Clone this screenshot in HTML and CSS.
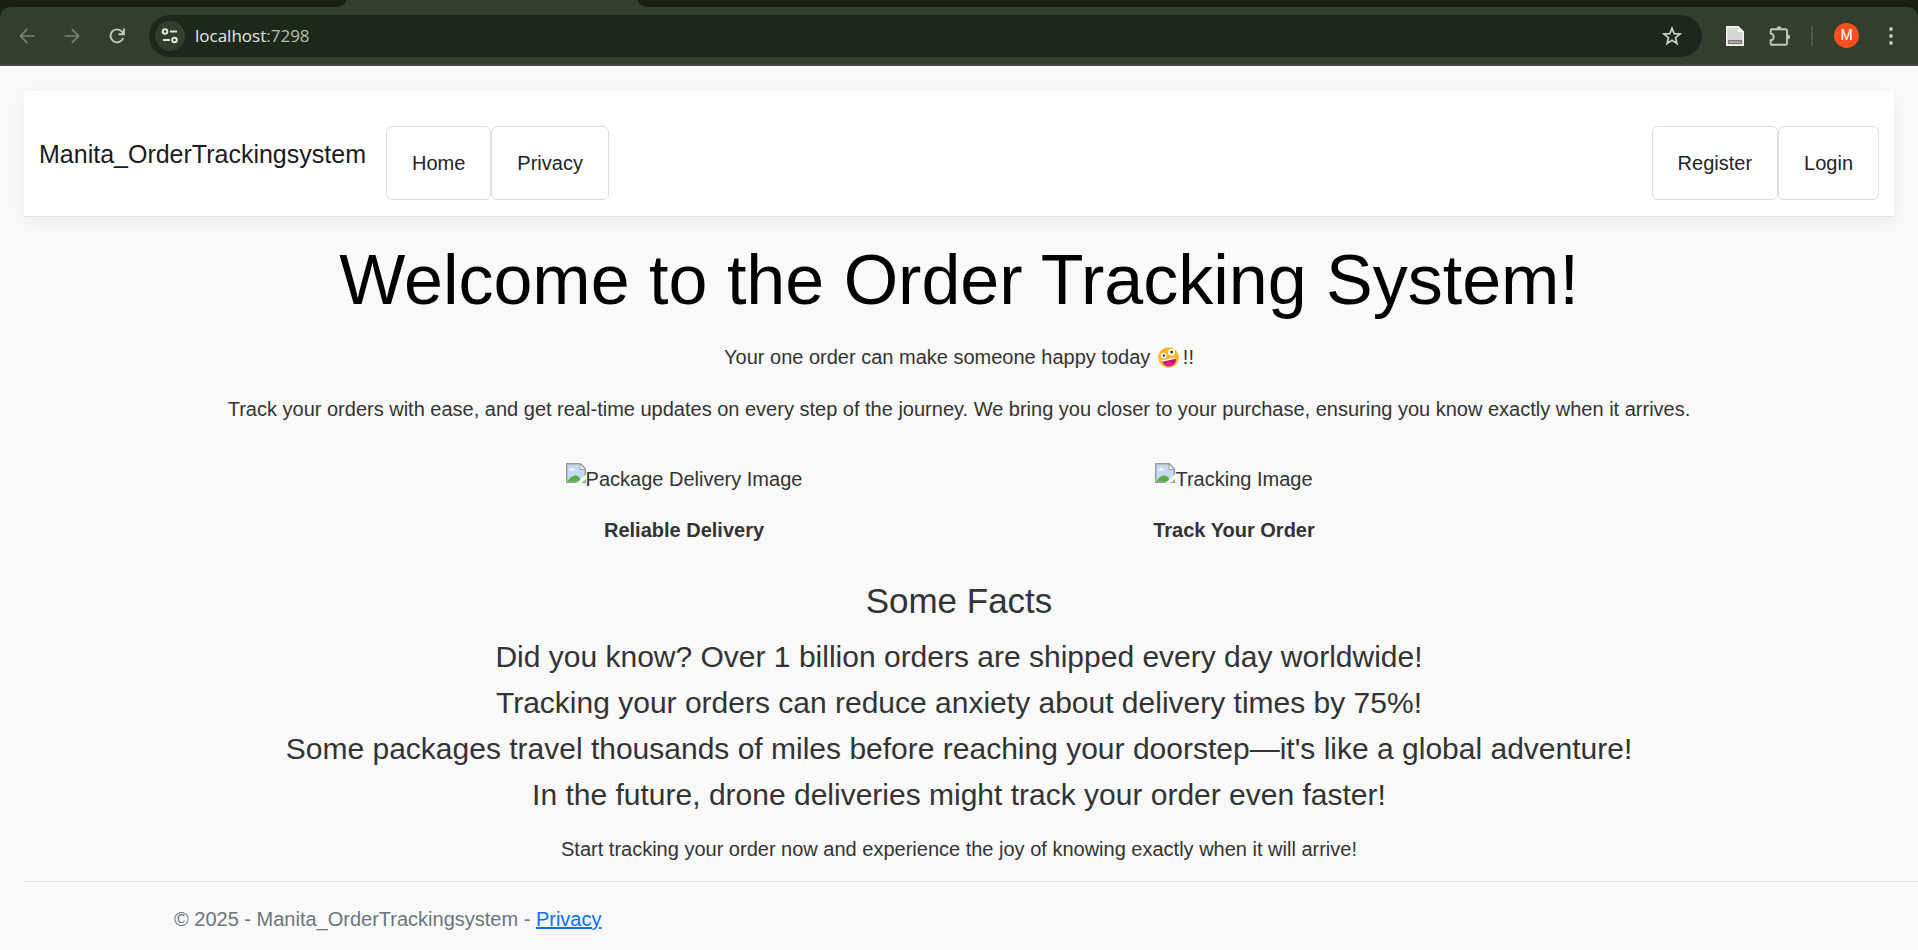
FILE: index.html
```html
<!DOCTYPE html>
<html lang="en">
<head>
<meta charset="utf-8">
<title>Home Page - Manita_OrderTrackingsystem</title>
<link rel="stylesheet" href="styles.css">
</head>
<body>
<div class="browser">
  <div class="tabs"><div class="tabs-left"></div><div class="tabs-right"></div></div>
  <div class="toolbar">
    <button class="tool dim" aria-label="Back"><svg width="16" height="16" viewBox="0 0 16 16" fill="none" stroke="currentColor" stroke-width="1.7"><path d="M15.500 8H1.500M8.200 1.200L1.400 8l6.800 6.800"/></svg></button>
    <button class="tool dim" aria-label="Forward"><svg width="16" height="16" viewBox="0 0 16 16" fill="none" stroke="currentColor" stroke-width="1.700"><path d="M.5 8h14M7.800 1.200L14.600 8l-6.800 6.800"/></svg></button>
    <button class="tool" aria-label="Reload"><svg width="16" height="16" viewBox="0 0 16 16" fill="none" stroke="currentColor" stroke-width="1.900"><path d="M14.200 10A6.500 6.500 0 1 1 13 3.600L14.600 5.500M15 .5v5.700H9.500"/></svg></button>
    <div class="address">
      <button class="site" aria-label="View site information"><svg width="18" height="16" viewBox="0 0 18 16" fill="none" stroke="currentColor" stroke-width="1.900"><circle cx="4" cy="3.500" r="2.300"/><path d="M9 3.500h7M2 12h7"/><circle cx="13.500" cy="12" r="2.300"/></svg></button>
      <div class="url" aria-label="Address">localhost<span class="port">:7298</span></div>
      <button class="star" aria-label="Bookmark this tab"><svg width="20" height="20" viewBox="0 0 20 20" fill="none" stroke="currentColor" stroke-width="1.700"><path d="M10 2.200l2.100 5.400 6 .4-4.600 3.700 1.500 5.800L10 14.300l-5 3.200 1.500-5.800L1.900 8l6-.4z"/></svg></button>
    </div>
    <button class="tool ext" aria-label="Extension"><svg width="18" height="20" viewBox="0 0 18 20"><path d="M.7.7h11.600l5 5v13.600H.7z" fill="#d6d6d6" stroke="#f4f4f4" stroke-width="1.400"/><path d="M12 .7v5.300h5.300z" fill="#fff"/><path d="M2.500 14.500h13v3h-13z" fill="#a9a9a9" stroke="#777"/></svg></button>
    <button class="tool" aria-label="Extensions"><svg width="22" height="22" viewBox="0 0 22 22"><path d="M2.800 4.300h13.900q1.300 0 1.300 1.300v12.900q0 1.300-1.300 1.300H2.800q-1.100 0-1.100-1.300v-3.200c4-.8 4-6 0-6.800V5.600q0-1.300 1.100-1.300z" fill="none" stroke="currentColor" stroke-width="1.900"/><path d="M7.500 3.800a2.500 2.500 0 0 1 5 0zM18.500 9.300a2.500 2.500 0 0 1 0 5z" fill="currentColor"/></svg></button>
    <span class="divider"></span>
    <button class="avatar" aria-label="Profile">M</button>
    <button class="tool menu" aria-label="Menu"><svg width="4" height="18" viewBox="0 0 4 18" fill="currentColor"><circle cx="2" cy="2" r="1.900"/><circle cx="2" cy="9" r="1.900"/><circle cx="2" cy="16" r="1.900"/></svg></button>
  </div>
</div>

<div class="page">
  <header class="header">
    <a class="brand" href="#">Manita_OrderTrackingsystem</a>
    <nav class="nav">
      <a class="nav-link" href="#">Home</a>
      <a class="nav-link" href="#privacy">Privacy</a>
    </nav>
    <nav class="nav account" aria-label="Account">
      <a class="nav-link" href="#register">Register</a>
      <a class="nav-link" href="#login">Login</a>
    </nav>
  </header>

  <main class="main">
    <h1>Welcome to the Order Tracking System!</h1>
    <p class="text">Your one order can make someone happy today <svg class="emoji" role="img" aria-label="Zany face" viewBox="0 0 20 20"><circle cx="10" cy="10" r="9.800" fill="#fdb52f"/><circle cx="5.400" cy="8.300" r="2.600" fill="#fff"/><circle cx="5.600" cy="8.300" r="1.100" fill="#222"/><circle cx="13" cy="5" r="3.200" fill="#fff"/><circle cx="13" cy="4.800" r="1.300" fill="#222"/><path d="M3.600 12.800L17 10.200c.6 4.300-1.600 7.200-4.900 8-3.500 1-7-.8-8.500-5.400z" fill="#b4126a"/><path d="M3.600 12.600L17 10l-.1 1.300L4.200 14z" fill="#fff"/><path d="M6.500 16c3-3 7-3 8.500 0-2 2.500-6 3-8.500 0z" fill="#e81c96"/></svg>!!</p>
    <p class="text">Track your orders with ease, and get real-time updates on every step of the journey. We bring you closer to your purchase, ensuring you know exactly when it arrives.</p>

    <svg class="symbols" aria-hidden="true"><symbol id="missing" viewBox="0 0 20 20"><path d="M.7.7h13.600l5 5v13.600H.7z" fill="#c5d8f6" stroke="#9a9a9a" stroke-width="1.400"/><path d="M3 7.500q0-1.500 1.600-1.500 1-2 2.700-.5 1.900 0 1.900 2z" fill="#fff"/><path d="M1.400 18.600c2-4 5-6.500 8.500-6.200 2 .1 4 2 5.500 6.200z" fill="#58ad3b"/><path d="M10.500 20l9.500-8.500V16l-4.500 4z" fill="#f9f9f9"/><path d="M14 1v5.500h5.300z" fill="#fff" stroke="#9a9a9a"/></symbol></svg>
    <div class="features">
      <div class="feature">
        <div class="picture"><svg class="missing"><use href="#missing"/></svg><span>Package Delivery Image</span></div>
        <p class="caption">Reliable Delivery</p>
      </div>
      <div class="feature">
        <div class="picture"><svg class="missing"><use href="#missing"/></svg><span>Tracking Image</span></div>
        <p class="caption">Track Your Order</p>
      </div>
    </div>

    <h2>Some Facts</h2>
    <ul class="facts">
      <li>Did you know? Over 1 billion orders are shipped every day worldwide!</li>
      <li>Tracking your orders can reduce anxiety about delivery times by 75%!</li>
      <li>Some packages travel thousands of miles before reaching your doorstep—it's like a global adventure!</li>
      <li>In the future, drone deliveries might track your order even faster!</li>
    </ul>
    <p class="closing">Start tracking your order now and experience the joy of knowing exactly when it will arrive!</p>
  </main>
</div>
<footer class="footer">© 2025 - Manita_OrderTrackingsystem - <a href="#privacy">Privacy</a></footer>
</body>
</html>
```

FILE: styles.css
```css
* { box-sizing: border-box; }
body {
  margin: 0;
  background: #f9f9f9;
  color: #333;
  font: 20px/30px "Liberation Sans", Arial, sans-serif;
}
h1, h2, p, ul { margin: 0; padding: 0; }
button { border: 0; padding: 0; background: none; color: inherit; font: inherit; }
svg { display: block; }

.browser { background: #172011; border-bottom: 2px solid #474747; }
.tabs { display: flex; justify-content: space-between; gap: 292px; height: 7px; background: #333e2e; }
.tabs-left { flex: 0 0 346px; background: #172011; border-bottom-right-radius: 14px 10px; }
.tabs-right { flex: 1; background: #172011; border-bottom-left-radius: 14px 10px; }
.toolbar {
  display: flex;
  align-items: center;
  height: 57px;
  padding: 0 5px 0 4px;
  background: #333e2e;
  border-radius: 10px 10px 0 0;
  color: #b9cdb3;
}
.tool { display: grid; place-items: center; width: 45px; height: 42px; }
.dim { color: #788373; }
.address {
  flex: 1;
  display: flex;
  align-items: center;
  height: 42px;
  margin: 0 10px;
  padding: 0 20px 0 6px;
  border-radius: 21px;
  background: #1e281a;
}
.site { display: grid; place-items: center; width: 30px; height: 30px; border-radius: 50%; background: #333e2e; color: #e0e8dc; }
.url { flex: 1; margin-left: 10px; color: #e4eae0; font: 17px/30px "Open Sans", "Noto Sans", sans-serif; }
.port { color: #b5bfb0; }
.star { color: #c8cec4; }
.divider { width: 2px; height: 20px; margin: 0 21px 0 9px; background: #4b5846; }
.avatar { width: 25px; height: 25px; margin-right: 9px; border-radius: 50%; background: #f8501f; color: #fff; font: 14px/25px Roboto, sans-serif; }

.page { padding: 25px 24px 0; }
.header {
  display: flex;
  align-items: flex-start;
  padding: 35px 15px 16px;
  background: #fff;
  border-bottom: 1px solid #dee2e6;
  box-shadow: 0 5px 20px rgba(0, 0, 0, .05);
}
.brand { margin: 9px 20px 0 0; color: #1b1b1b; font-size: 25px; line-height: 38px; text-decoration: none; }
.nav { display: flex; }
.account { margin-left: auto; }
.nav-link { padding: 21px 25px; border: 1px solid #ddd; border-radius: 6px; color: #212529; text-decoration: none; }

.main { display: flex; flex-direction: column; align-items: center; padding-top: 21px; text-align: center; }
h1 { margin-bottom: 20px; color: #000; font-size: 70px; line-height: 84px; font-weight: 400; }
.text { margin-bottom: 22px; }
.emoji { display: inline-block; width: 21px; height: 21px; margin: 0 4px 0 2px; vertical-align: -4px; }
.symbols { position: absolute; width: 0; height: 0; }
.features { display: flex; width: 100%; max-width: 1100px; margin-top: 17px; }
.feature { flex: 1; }
.picture { display: flex; justify-content: center; align-items: flex-start; }
.picture span { padding-top: 1px; }
.missing { width: 20px; height: 20px; }
.caption { margin-top: 21px; font-weight: 700; }
h2 { margin: 35px 0 12px; font-size: 35px; line-height: 42px; font-weight: 400; }
.facts { list-style: none; font-size: 30px; line-height: 46px; }
.closing { margin-top: 16px; }

.footer {
  margin: 17px 0 0 24px;
  padding: 22px 150px 0;
  border-top: 1px solid #dee2e6;
  color: #6c757d;
}
.footer a { color: #0d6efd; }
```
